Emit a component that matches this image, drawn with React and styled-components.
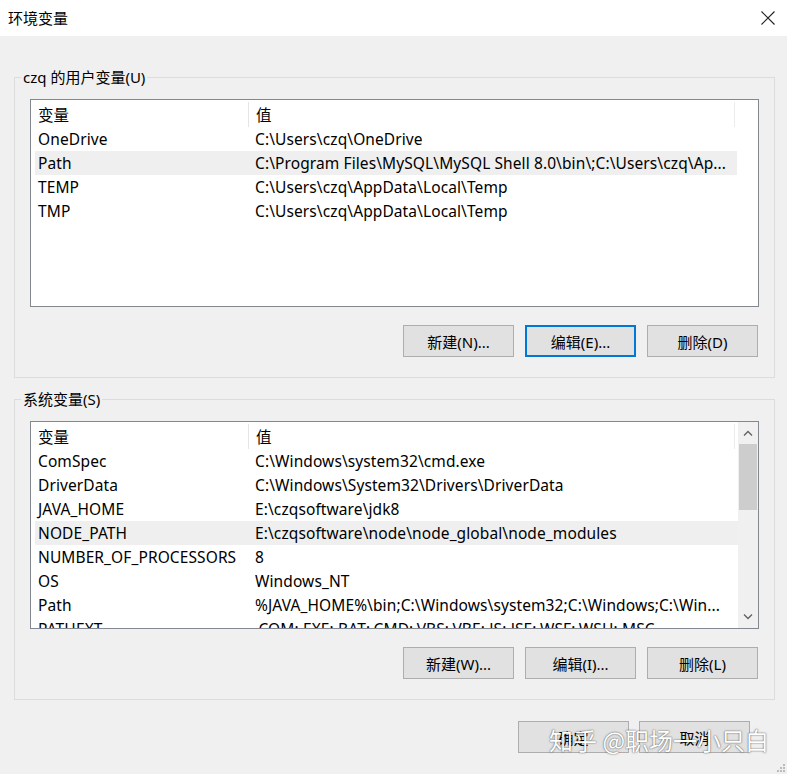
import React from 'react'
import styled, { createGlobalStyle } from 'styled-components'

const GlobalStyle = createGlobalStyle`
  html, body {
    margin: 0;
    padding: 0;
    background: #f0f0f0;
  }
  body {
    font-family: "Noto Sans", "Noto Sans CJK SC", sans-serif;
    font-size: 15px;
    color: #000;
  }
`

const userVars = [
  ['OneDrive', 'C:\\Users\\czq\\OneDrive'],
  ['Path', 'C:\\Program Files\\MySQL\\MySQL Shell 8.0\\bin\\;C:\\Users\\czq\\Ap...', true],
  ['TEMP', 'C:\\Users\\czq\\AppData\\Local\\Temp'],
  ['TMP', 'C:\\Users\\czq\\AppData\\Local\\Temp'],
]

const systemVars = [
  ['ComSpec', 'C:\\Windows\\system32\\cmd.exe'],
  ['DriverData', 'C:\\Windows\\System32\\Drivers\\DriverData'],
  ['JAVA_HOME', 'E:\\czqsoftware\\jdk8'],
  ['NODE_PATH', 'E:\\czqsoftware\\node\\node_global\\node_modules', true],
  ['NUMBER_OF_PROCESSORS', '8'],
  ['OS', 'Windows_NT'],
  ['Path', '%JAVA_HOME%\\bin;C:\\Windows\\system32;C:\\Windows;C:\\Win...'],
  ['PATHEXT', '.COM;.EXE;.BAT;.CMD;.VBS;.VBE;.JS;.JSE;.WSF;.WSH;.MSC'],
]

const VarList = ({ rows, scroll }) => (
  <ListBox>
    <Columns>
      <Row header>
        <Cell>变量</Cell>
        <Cell second>值</Cell>
      </Row>
      {rows.map(([name, value, selected]) => (
        <Row key={name} selected={selected}>
          <Cell>{name}</Cell>
          <Cell second>{value}</Cell>
        </Row>
      ))}
    </Columns>
    {scroll ? (
      <ScrollBar>
        <ScrollArrow>
          <svg width="10" height="6" viewBox="0 0 10 6">
            <path d="M1 5.5 L5 1.5 L9 5.5" fill="none" stroke="#606060" strokeWidth="1.3" />
          </svg>
        </ScrollArrow>
        <Thumb />
        <Track />
        <ScrollArrow>
          <svg width="10" height="6" viewBox="0 0 10 6">
            <path d="M1 0.5 L5 4.5 L9 0.5" fill="none" stroke="#606060" strokeWidth="1.3" />
          </svg>
        </ScrollArrow>
      </ScrollBar>
    ) : (
      <Spacer />
    )}
  </ListBox>
)

const App = () => {
  return (
    <Window>
      <GlobalStyle />
      <TitleBar>
        <Title>环境变量</Title>
        <svg width="14" height="14" viewBox="0 0 14 14">
          <path d="M0.5 0.5 L13.5 13.5 M13.5 0.5 L0.5 13.5" stroke="#222" strokeWidth="1.1" />
        </svg>
      </TitleBar>
      <Body>
        <Group>
          <Legend>czq 的用户变量(U)</Legend>
          <VarList rows={userVars} />
          <ButtonRow>
            <Button>新建(N)...</Button>
            <Button focused>编辑(E)...</Button>
            <Button>删除(D)</Button>
          </ButtonRow>
        </Group>
        <Group>
          <Legend>系统变量(S)</Legend>
          <VarList rows={systemVars} scroll />
          <ButtonRow>
            <Button>新建(W)...</Button>
            <Button>编辑(I)...</Button>
            <Button>删除(L)</Button>
          </ButtonRow>
        </Group>
      </Body>
      <Footer>
        <Button>确定</Button>
        <Button>取消</Button>
      </Footer>
      <Watermark>知乎 @职场一小只白</Watermark>
      <Grip width="10" height="10" viewBox="0 0 10 10">
        {[[8, 2], [8, 5], [5, 5], [8, 8], [5, 8], [2, 8]].map(([x, y]) => (
          <rect key={`${x}-${y}`} x={x - 1} y={y - 1} width="2" height="2" fill="#bcbcbc" />
        ))}
      </Grip>
    </Window>
  )
}

export default App

const Window = styled.div`
  position: relative;
  width: 787px;
  height: 774px;
  background: #f0f0f0;
  display: flex;
  flex-direction: column;
  overflow: hidden;
`

const TitleBar = styled.div`
  height: 36px;
  flex-shrink: 0;
  background: #fff;
  display: flex;
  align-items: center;
  justify-content: space-between;
  padding: 0 12px 0 8px;
`

const Title = styled.span`
  font-size: 15px;
  line-height: 20px;
`

const Body = styled.div`
  display: flex;
  flex-direction: column;
  gap: 11px;
  padding: 31px 12px 0 14px;
`

const Group = styled.fieldset`
  margin: 0;
  min-width: 0;
  border: 1px solid #dcdcdc;
  padding: 0 15px 20px;
`

const Legend = styled.legend`
  font-size: 15px;
  line-height: 20px;
  padding: 0 2px;
  margin-left: -9px;
`

const ListBox = styled.div`
  margin-top: 12px;
  height: 208px;
  box-sizing: border-box;
  border: 1px solid #828790;
  background: #fff;
  display: flex;
  overflow: hidden;
`

const Columns = styled.div`
  flex: 1;
  min-width: 0;
  padding-left: 4px;
  display: flex;
  flex-direction: column;
`

const Row = styled.div`
  flex-shrink: 0;
  display: grid;
  grid-template-columns: 213px 487px;
  height: ${(p) => (p.header ? '27px' : '24px')};
  padding-top: ${(p) => (p.header ? '2px' : '0')};
  box-sizing: border-box;
  align-items: center;
  background: ${(p) => (p.selected ? '#efefef' : 'transparent')};
  font-size: 15.5px;
  letter-spacing: 0.1px;
  line-height: 20px;

  ${(p) =>
    p.header &&
    `
    & > div { height: 100%; display: flex; align-items: center; }
    & > div + div { border-left: 1px solid #e5e5e5; border-right: 1px solid #ececec; }
  `}
`

const Cell = styled.div`
  padding-left: ${(p) => (p.second ? '7px' : '3px')};
  white-space: nowrap;
  overflow: hidden;
`

const Spacer = styled.div`
  width: 21px;
  flex-shrink: 0;
`

const ScrollBar = styled.div`
  width: 20px;
  flex-shrink: 0;
  background: #f0f0f0;
  display: flex;
  flex-direction: column;
`

const ScrollArrow = styled.div`
  height: 22px;
  display: flex;
  align-items: center;
  justify-content: center;
`

const Thumb = styled.div`
  height: 66px;
  margin: 0 1px;
  background: #cdcdcd;
`

const Track = styled.div`
  flex: 1;
`

const ButtonRow = styled.div`
  display: flex;
  justify-content: flex-end;
  gap: 11px;
  margin-top: 18px;
  padding-right: 1px;
`

const Button = styled.div`
  width: 111px;
  height: 32px;
  box-sizing: border-box;
  display: flex;
  align-items: center;
  justify-content: center;
  background: #e1e1e1;
  border: ${(p) => (p.focused ? '2px solid #0078d7' : '1px solid #adadad')};
  font-size: 15px;
`

const Footer = styled.div`
  display: flex;
  justify-content: flex-end;
  gap: 10px;
  padding: 21px 37px 0 0;
`

const Watermark = styled.div`
  position: absolute;
  left: 549px;
  top: 725px;
  font-family: "Noto Sans CJK SC", sans-serif;
  font-size: 24px;
  line-height: 30px;
  color: #fff;
  white-space: nowrap;
  text-shadow: 0 0 2px rgba(0, 0, 0, 0.5), 0 0 1px rgba(0, 0, 0, 0.45);
`

const Grip = styled.svg`
  position: absolute;
  right: 1px;
  bottom: 1px;
`
